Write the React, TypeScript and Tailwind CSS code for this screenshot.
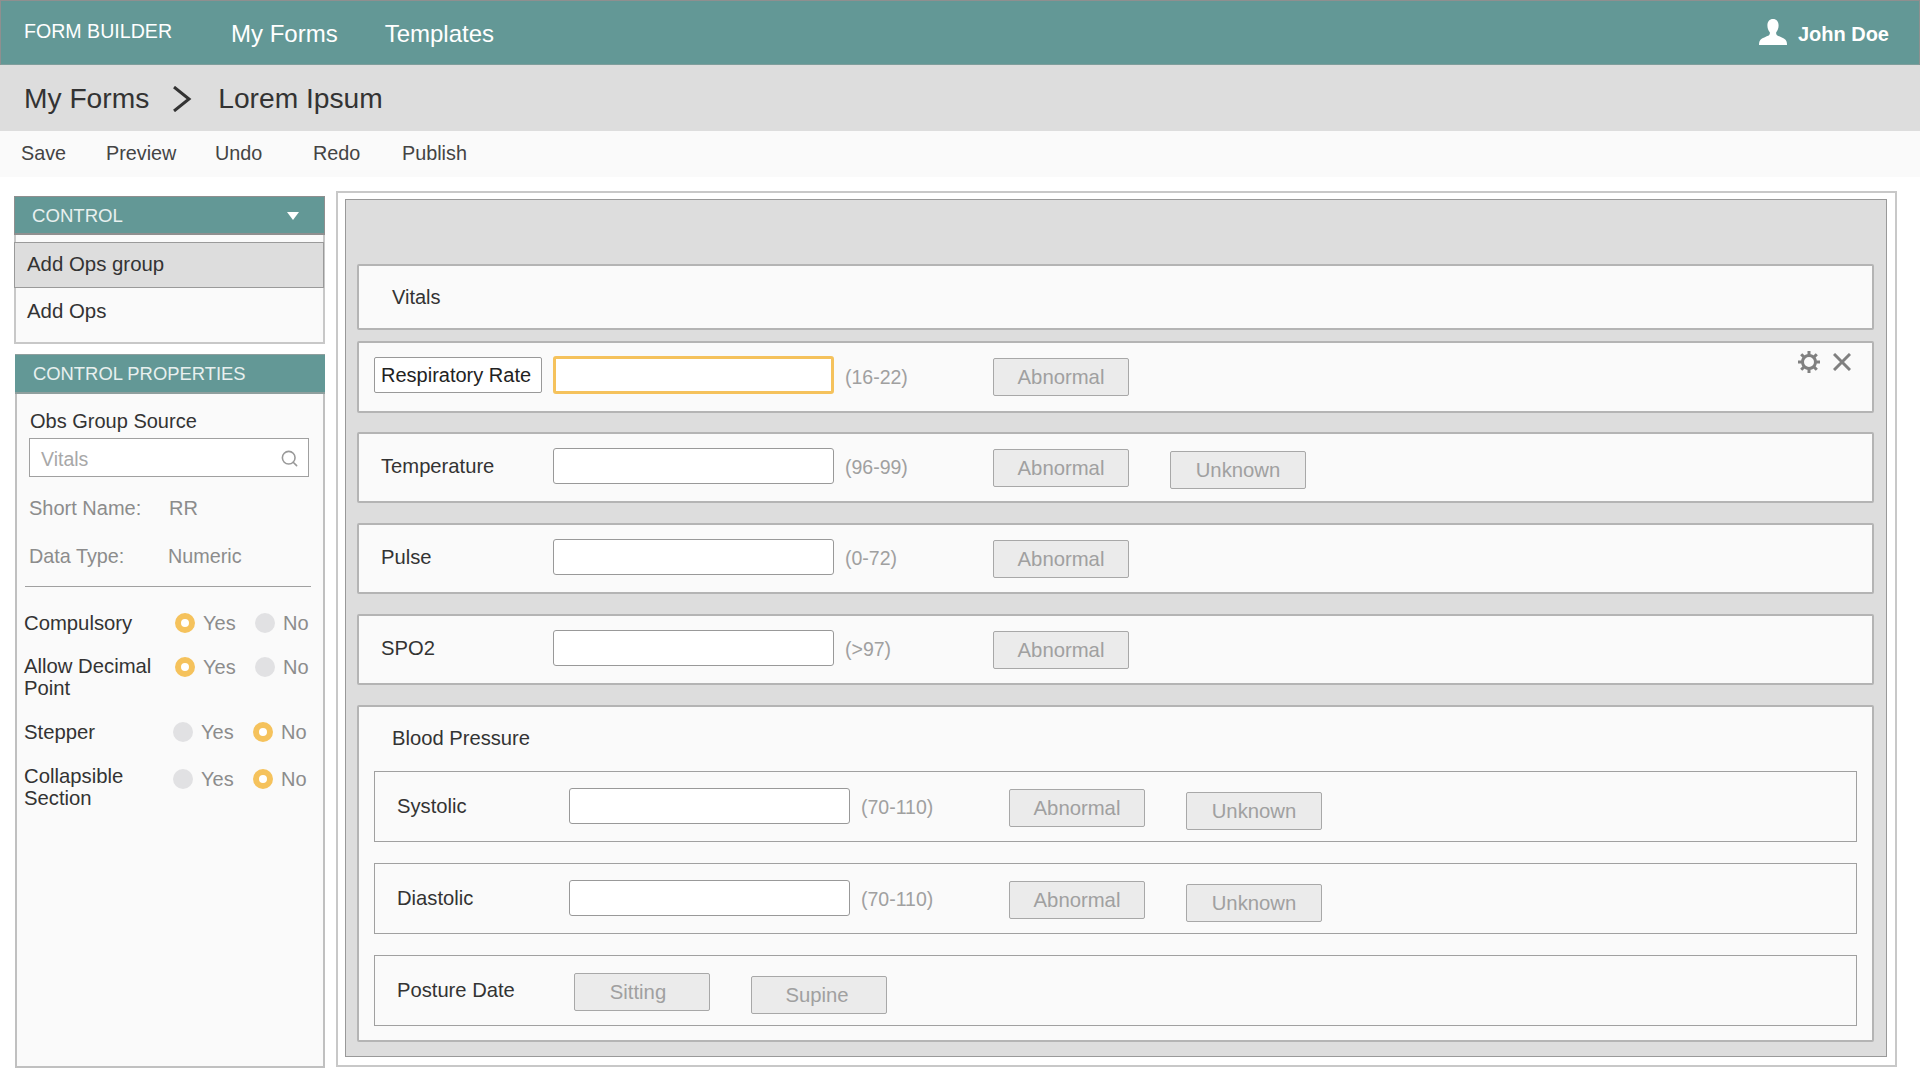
import { Search } from "lucide-react"

function UserIcon() {
  return (
    <svg width="28" height="26" viewBox="0 0 28 26" className="fill-white">
      <path d="M14 0c3.500 0 5.600 2.600 5.600 6.500 0 3-1 5-2.200 6.500-.6.8-.3 2.500.6 3.200 1.500 1 6.500 2.500 8.500 4.500 1 1.100 1.500 2.800 1.500 5.300H0c0-2.500.5-4.200 1.500-5.300 2-2 7-3.500 8.500-4.500.9-.7 1.200-2.400.6-3.200-1.200-1.500-2.200-3.500-2.200-6.500C8.400 2.600 10.500 0 14 0z" />
    </svg>
  )
}

function GearIcon() {
  return (
    <svg width="24" height="24" viewBox="0 0 24 24" fill="none" stroke="#808080">
      <circle cx="12" cy="12" r="6.500" strokeWidth="3" />
      <path
        d="M12 1v4M12 19v4M1 12h4M19 12h4M4.200 4.200l2.900 2.900M16.900 16.900l2.900 2.900M4.200 19.800l2.900-2.900M16.900 7.100l2.900-2.900"
        strokeWidth="3"
      />
    </svg>
  )
}

function CloseIcon() {
  return (
    <svg width="18" height="18" viewBox="0 0 18 18" fill="none" stroke="#808080" strokeWidth="3">
      <path d="M1 1l16 16M17 1L1 17" />
    </svg>
  )
}

function Radio({ label, on }: { label: string; on?: boolean }) {
  return (
    <div className="flex w-[80px] items-center gap-[8px]">
      {on ? (
        <span className="h-5 w-5 rounded-full border-[6px] border-[#f5c25c] bg-white" />
      ) : (
        <span className="h-5 w-5 rounded-full bg-[#e1e1e3]" />
      )}
      <span className="text-[20px] leading-[22px] text-[#8c8c8c]">{label}</span>
    </div>
  )
}

function OptionRow({
  label,
  yes,
  className,
  optionsClass,
}: {
  label: string
  yes: boolean
  className: string
  optionsClass?: string
}) {
  return (
    <div className={"flex items-start " + className}>
      <div className="w-[149px] shrink-0 text-[20.300px] leading-[22px] text-[#333]">{label}</div>
      <div className={(yes ? "ml-[2px] flex " : "flex ") + (optionsClass ?? "")}>
        <Radio label="Yes" on={yes} />
        <Radio label="No" on={!yes} />
      </div>
    </div>
  )
}

function Abnormal({ label, className }: { label: string; className: string }) {
  return (
    <button
      className={
        "h-[38px] w-[136px] rounded-[2px] border border-[#a8a8a8] bg-[#ebebeb] text-[20.300px] text-[#a0a0a0] " +
        className
      }
    >
      {label}
    </button>
  )
}

function Field({ focused }: { focused?: boolean }) {
  return (
    <input
      className={
        focused
          ? "-mt-[2px] h-[38px] w-[281px] rounded-[3px] border-[3px] border-[#f5c25c] bg-white"
          : "h-[36px] w-[281px] rounded-[3px] border border-[#999] bg-white"
      }
    />
  )
}

function Range({ value }: { value: string }) {
  return <div className="mt-[1px] w-[159px] pl-[11px] text-[19.500px] leading-[36px] text-[#a0a0a0]">{value}</div>
}

function VitalRow({ label, range, unknown }: { label: string; range: string; unknown?: boolean }) {
  return (
    <div className="mt-[20px] flex h-[71px] items-start rounded-[2px] border-2 border-[#b4b4b4] bg-[#fafafa] pl-[22px] pt-[14px]">
      <div className="w-[172px] text-[20.200px] leading-[36px] text-[#333]">{label}</div>
      <Field />
      <Range value={range} />
      <Abnormal label="Abnormal" className="mt-[1px]" />
      {unknown && <Abnormal label="Unknown" className="ml-[41px] mt-[3px]" />}
    </div>
  )
}

function BpRow({ label, className }: { label: string; className: string }) {
  return (
    <div className={"flex h-[71px] items-start border border-[#a0a0a0] bg-[#fafafa] pl-[22px] pt-[16px] " + className}>
      <div className="w-[172px] text-[20.200px] leading-[36px] text-[#333]">{label}</div>
      <Field />
      <Range value="(70-110)" />
      <Abnormal label="Abnormal" className="mt-[1px]" />
      <Abnormal label="Unknown" className="ml-[41px] mt-[4px]" />
    </div>
  )
}

export default function App() {
  return (
    <div className="flex h-[1080px] w-[1920px] flex-col overflow-hidden bg-white font-['Liberation_Sans',Arial,sans-serif]">
      <header className="flex h-[65px] items-center border border-[#8f8f8f] border-b-[#7f9f9d] bg-[#639896] text-white">
        <div className="mb-[1px] ml-[23px] w-[207px] text-[19.600px]">FORM BUILDER</div>
        <nav className="mt-[2px] flex gap-[47px] text-[24px]">
          <span>My Forms</span>
          <span>Templates</span>
        </nav>
        <div className="ml-auto mr-[30px] flex items-center gap-[11px] text-[20px] font-bold">
          <span className="mb-[2px]">
            <UserIcon />
          </span>
          <span className="mt-[2px]">John Doe</span>
        </div>
      </header>

      <div className="flex h-[66px] items-center bg-[#dddddd] pl-[24px] pt-[1px] text-[28.200px] text-[#333] shadow-[0_1px_2px_rgba(0,0,0,0.08)]">
        <span>My Forms</span>
        <svg width="20" height="26" viewBox="0 0 20 26" fill="none" stroke="#333" strokeWidth="3" className="ml-[23px] mr-[26px]">
          <path d="M2 1l15 12L2 25" />
        </svg>
        <span>Lorem Ipsum</span>
      </div>

      <div className="flex h-[46px] items-center bg-[#fafafa] pl-[21px] text-[19.800px] text-[#444]">
        <span className="w-[85px]">Save</span>
        <span className="w-[109px]">Preview</span>
        <span className="w-[98px]">Undo</span>
        <span className="w-[89px]">Redo</span>
        <span>Publish</span>
      </div>

      <div className="flex items-start pl-[14px]">
        <aside className="mt-[19px] flex h-[872px] w-[311px] flex-col">
          <div className="flex h-[39px] items-center justify-between border border-[#8f8f8f] border-b-2 bg-[#639896] pl-[17px] pr-[25px] pt-[2px] text-[18.600px] text-[#e8f0ef]">
            <span>CONTROL</span>
            <span className="h-0 w-0 border-x-[6px] border-t-[8px] border-x-transparent border-t-white" />
          </div>
          <div className="flex h-[109px] flex-col border-2 border-t-0 border-[#c8c8c8] bg-[#fafafa]">
            <div className="-ml-[2px] mt-[7px] flex h-[46px] w-[310px] items-center border border-[#9a9a9a] bg-[#dddddd] pb-[2px] pl-[12px] text-[20.400px] text-[#333]">
              Add Ops group
            </div>
            <div className="pl-[11px] pt-[11px] text-[20.400px] leading-[24px] text-[#333]">Add Ops</div>
          </div>

          <div className="ml-[1px] mt-[10px] flex h-[40px] items-center border-b-2 border-t border-[#8f9f9e] bg-[#639896] pl-[18px] text-[18.400px] text-[#e8f0ef]">
            CONTROL PROPERTIES
          </div>
          <div className="ml-[1px] flex-1 border-2 border-t-0 border-[#c0c0c0] bg-[#fafafa]">
            <div className="pl-[13px] pt-[16px] text-[20px] leading-[22px] text-[#333]">Obs Group Source</div>
            <div className="ml-[12px] mt-[6px] flex h-[39px] w-[280px] items-center justify-between border border-[#a0a0a0] bg-white pl-[11px] pr-[9px]">
              <span className="mt-[4px] text-[19.500px] text-[#a8a8a8]">Vitals</span>
              <Search size={19} strokeWidth={2} color="#999" className="mt-[2px]" />
            </div>
            <div className="ml-[12px] mt-[20px] flex text-[20px] leading-[22px] text-[#8c8c8c]">
              <span className="w-[140px]">Short Name:</span>
              <span>RR</span>
            </div>
            <div className="ml-[12px] mt-[26px] flex text-[19.800px] leading-[22px] text-[#8c8c8c]">
              <span className="w-[139px]">Data Type:</span>
              <span>Numeric</span>
            </div>
            <hr className="ml-[8px] mt-[19px] w-[286px] border-[#a0a0a0]" />
            <div className="pl-[7px]">
              <OptionRow label="Compulsory" yes className="mt-[25px]" />
              <OptionRow label="Allow Decimal Point" yes className="mt-[21px]" optionsClass="mt-[1px]" />
              <OptionRow label="Stepper" yes={false} className="mt-[22px]" />
              <OptionRow label="Collapsible Section" yes={false} className="mt-[22px]" optionsClass="mt-[3px]" />
            </div>
          </div>
        </aside>

        <main className="ml-[11px] mt-[14px] h-[876px] w-[1561px] border-2 border-[#c8c8c8] bg-white pb-[6px] pl-[7px] pr-[8px] pt-[6px]">
          <div className="h-[858px] border border-[#999] bg-[#dddddd] pl-[11px] pr-[12px] pt-[64px]">
            <div className="flex h-[66px] items-center rounded-[2px] border-2 border-[#b4b4b4] bg-[#fafafa] pl-[33px] text-[20px] text-[#333]">
              Vitals
            </div>

            <div className="relative mt-[11px] flex h-[72px] items-start rounded-[2px] border-2 border-[#b4b4b4] bg-[#fafafa] pl-[15px] pt-[15px]">
              <div className="-mt-[1px] h-[36px] w-[168px] rounded-[2px] border border-[#999] bg-white pl-[6px] text-[20px] leading-[34px] text-[#222]">
                Respiratory Rate
              </div>
              <div className="ml-[11px]">
                <Field focused />
              </div>
              <Range value="(16-22)" />
              <Abnormal label="Abnormal" className="" />
              <div className="absolute right-[21px] top-[7px] flex items-center gap-[12px]">
                <GearIcon />
                <CloseIcon />
              </div>
            </div>

            <div className="-mt-[1px]">
              <VitalRow label="Temperature" range="(96-99)" unknown />
            </div>
            <VitalRow label="Pulse" range="(0-72)" />
            <VitalRow label="SPO2" range="(>97)" />

            <div className="mt-[20px] h-[337px] rounded-[2px] border-2 border-[#b4b4b4] bg-[#fafafa] pl-[15px] pr-[15px] pt-[20px]">
              <div className="pl-[18px] text-[20.200px] leading-[22px] text-[#333]">Blood Pressure</div>
              <BpRow label="Systolic" className="mt-[22px]" />
              <BpRow label="Diastolic" className="mt-[21px]" />
              <div className="mt-[21px] flex h-[71px] items-start border border-[#a0a0a0] bg-[#fafafa] pl-[22px] pt-[17px]">
                <div className="w-[177px] text-[20.200px] leading-[34px] text-[#333]">Posture Date</div>
                <Abnormal label="Sitting" className="h-[37px] w-[134px] pr-[8px]" />
                <Abnormal label="Supine" className="ml-[41px] mt-[3px] h-[37px] w-[135px] pr-[4px]" />
              </div>
            </div>
          </div>
        </main>
      </div>
    </div>
  )
}
